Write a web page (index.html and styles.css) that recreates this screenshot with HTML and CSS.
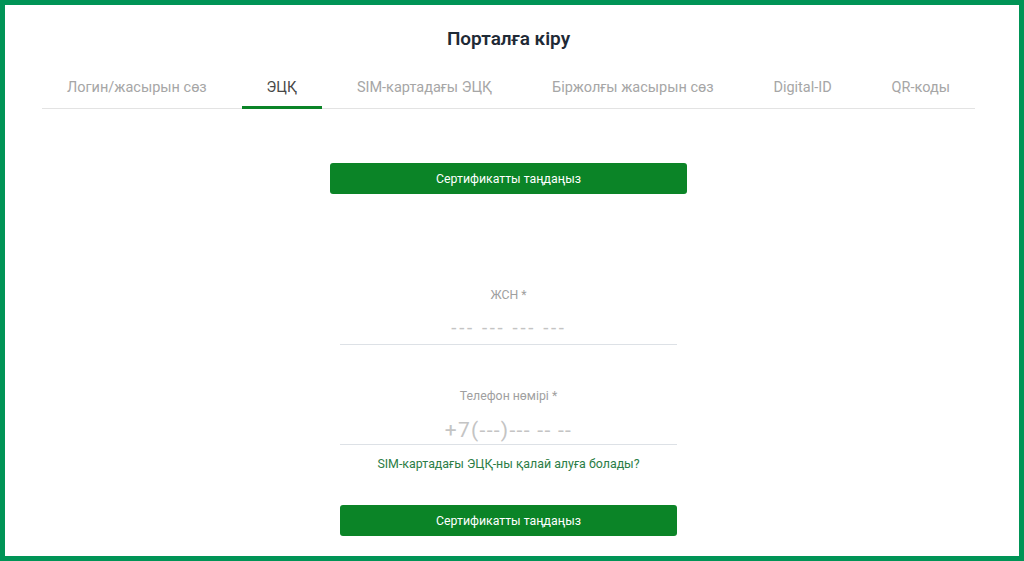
FILE: index.html
```html
<!DOCTYPE html>
<html lang="kk">
<head>
<meta charset="utf-8">
<title>Порталға кіру</title>
<link rel="stylesheet" href="styles.css">
</head>
<body>
<div class="frame">
  <div class="content">
    <h1 class="title">Порталға кіру</h1>
    <nav class="tabs">
      <a class="tab">Логин/жасырын сөз</a>
      <a class="tab active">ЭЦҚ</a>
      <a class="tab">SIM-картадағы ЭЦҚ</a>
      <a class="tab">Біржолғы жасырын сөз</a>
      <a class="tab">Digital-ID</a>
      <a class="tab">QR-коды</a>
    </nav>
    <div class="panel">
      <button class="btn btn-wide">Сертификатты таңдаңыз</button>
      <label class="field field-iin">
        <span class="label">ЖСН *</span>
        <input class="input input-iin" placeholder="--- --- --- ---">
      </label>
      <label class="field field-phone">
        <span class="label">Телефон нөмірі *</span>
        <input class="input input-phone" placeholder="+7(---)--- -- --">
      </label>
      <a class="link">SIM-картадағы ЭЦҚ-ны қалай алуға болады?</a>
      <button class="btn btn-narrow">Сертификатты таңдаңыз</button>
    </div>
  </div>
</div>
</body>
</html>
```
FILE: styles.css
```css
* { box-sizing: border-box; }
html, body { margin: 0; padding: 0; background: #fff; }
body { font-family: Roboto, "Noto Sans", Arial, sans-serif; }
.frame {
  width: 1024px;
  height: 561px;
  border: 5px solid #009456;
  overflow: hidden;
}
.content {
  padding: 0 44px 0 37px;
}
.title {
  margin: 22px 0 0;
  text-align: center;
  font-size: 19px;
  line-height: 24px;
  font-weight: 600;
  color: #1f2a36;
}
.tabs {
  margin-top: 27px;
  display: flex;
  justify-content: space-between;
  border-bottom: 1px solid #e3e3e3;
  height: 31px;
}
.tab {
  padding: 0 25px 8px;
  border-bottom: 3px solid transparent;
  font-size: 14.5px;
  line-height: 20px;
  color: #a6a6a6;
  white-space: nowrap;
  height: 31px;
}
.tab.active {
  color: #474747;
  border-bottom-color: #0b8427;
}
.panel {
  display: flex;
  flex-direction: column;
  align-items: center;
}
.btn {
  height: 31px;
  border: none;
  border-radius: 3px;
  background: #0b8427;
  color: #fff;
  font-family: inherit;
  font-size: 12.3px;
  padding: 0;
}
.btn-wide { width: 357px; margin-top: 54px; }
.btn-narrow { width: 337px; margin-top: 33px; }
.field {
  width: 337px;
  display: flex;
  flex-direction: column;
  align-items: center;
}
.field-iin { margin-top: 93px; }
.field-phone { margin-top: 43px; }
.label {
  font-size: 12.3px;
  line-height: 16px;
  color: #a0a0a0;
}
.input {
  width: 100%;
  height: 35px;
  border: none;
  border-bottom: 1px solid #dde1e6;
  outline: none;
  text-align: center;
  font-family: inherit;
  padding: 0;
  background: transparent;
}
.input::placeholder { color: #c4c4c4; }
.input-iin { margin-top: 7px; font-size: 17px; font-family: "DejaVu Sans", sans-serif; }
.input-iin::placeholder { letter-spacing: 1.7px; }
.input-phone { margin-top: 6px; padding-top: 6px; font-size: 21px; }
.input-phone::placeholder { letter-spacing: 1.3px; }
.link {
  margin-top: 11px;
  font-size: 12.4px;
  line-height: 16px;
  color: #2b7d46;
}
```
